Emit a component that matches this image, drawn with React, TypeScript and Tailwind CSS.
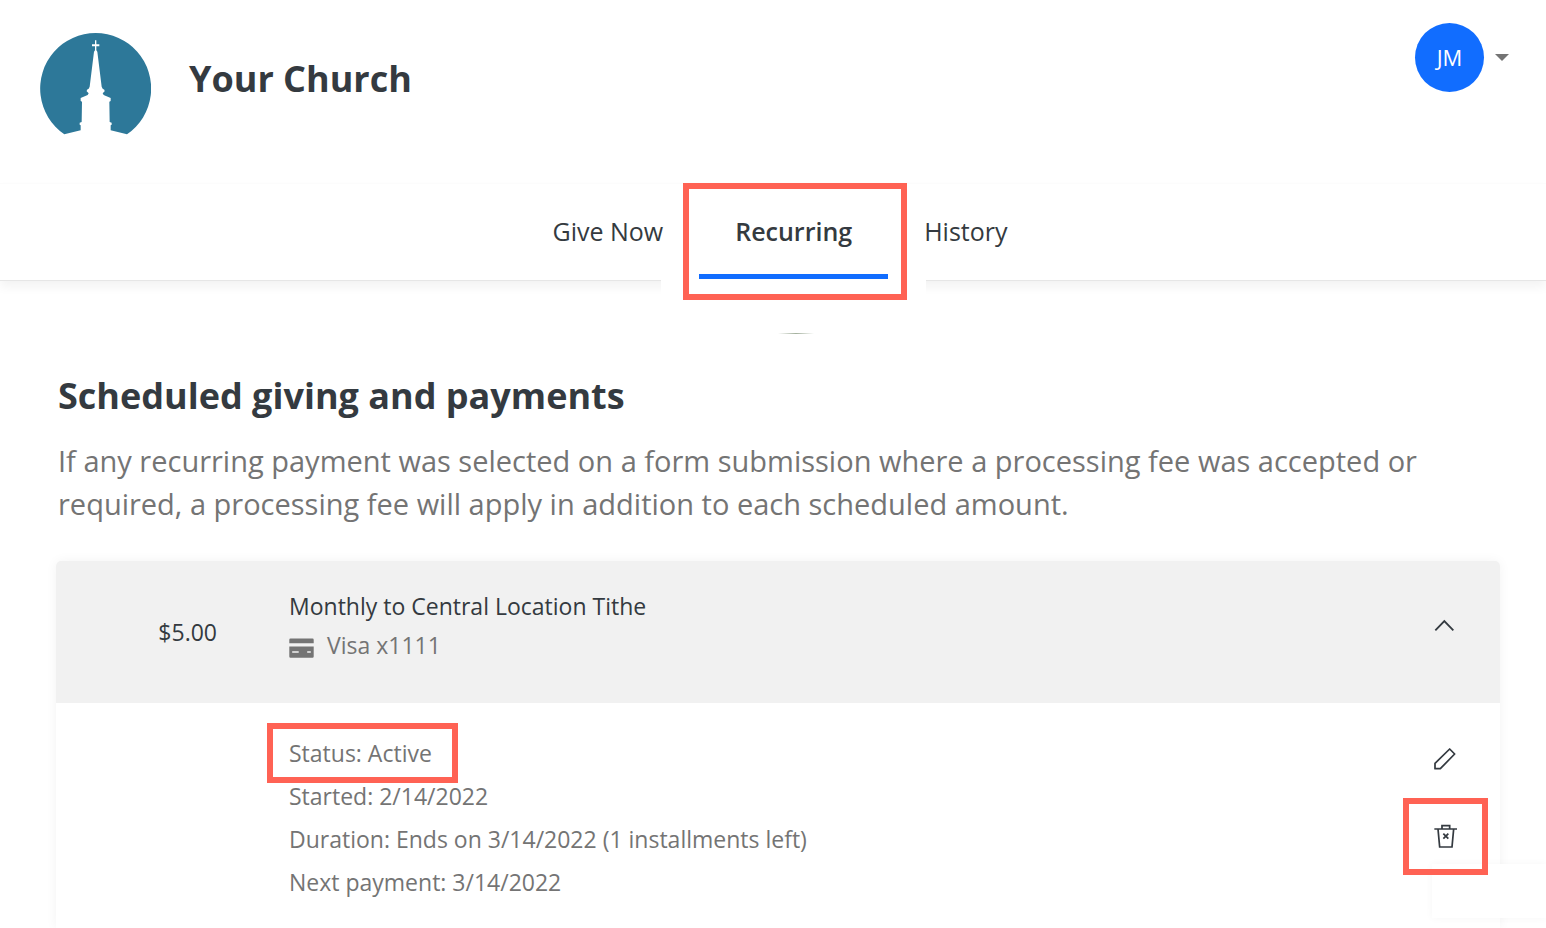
import type { ReactNode } from "react";

function ChurchLogo() {
  return (
    <svg viewBox="60 36 333 306" className="h-[102px] w-[111px] shrink-0" role="img" aria-label="Church steeple">
      <path
        fill="#2d7899"
        d="M133 340 A166.5 166.5 0 1 1 321 340 L272 328 L272 313 L275 311 L275 305 L269 303 L268 242 L272 240 L272 231 L251 222 L248 217 L254 211 L253 206 L248 203 L245 197 L232 92 L229 88 L229 76 L238 76 L238 70 L229 70 L229 58 L225 58 L225 70 L216 70 L216 76 L225 76 L225 88 L222 92 L209 197 L206 203 L201 206 L200 211 L206 217 L203 222 L182 231 L182 240 L186 242 L185 303 L179 305 L179 311 L182 313 L182 328 Z"
      />
    </svg>
  );
}

function CardIcon() {
  return (
    <svg viewBox="0 0 25 20" className="h-5 w-[25px] shrink-0" fill="#747474" aria-hidden="true">
      <path d="M1.5 0.5h22a1.2 1.2 0 0 1 1.2 1.2V5.3H0.3V1.7A1.2 1.2 0 0 1 1.5 0.5z" />
      <path
        fillRule="evenodd"
        d="M0.3 8.5h24.4v10a1.2 1.2 0 0 1-1.2 1.2h-22a1.2 1.2 0 0 1-1.2-1.2zM3.2 13.2v1.6h6.5v-1.6zM18.2 13.2v1.6h3.6v-1.6z"
      />
    </svg>
  );
}

function ChevronUp() {
  return (
    <svg viewBox="162 105 63 63" className="h-[21px] w-[21px]" fill="none" stroke="#343a40" strokeWidth="5.5" aria-hidden="true">
      <path d="M166 151 L193 123 L220 151" />
    </svg>
  );
}

function PencilIcon() {
  return (
    <svg viewBox="160 80 75 75" className="h-[25px] w-[25px]" fill="none" stroke="#343a40" strokeWidth="5.2" aria-hidden="true">
      <path d="M166 145 L166 129 L210 86 L225 101 L182 145 Z" strokeLinejoin="round" />
    </svg>
  );
}

function TrashIcon() {
  return (
    <svg viewBox="160 312 75 75" className="h-[25px] w-[25px]" fill="none" stroke="#343a40" strokeWidth="5.2" aria-hidden="true">
      <path d="M164 327 H232 M187 327 V317 H210 V327 M175 327 L180 381 H217 L222 327" />
      <path d="M191 341 L206 356 M206 341 L191 356" />
    </svg>
  );
}

function Highlight({ className }: { className: string }) {
  return <span aria-hidden="true" className={`pointer-events-none absolute border-[6px] border-[#ff6254] ${className}`} />;
}

function Tab({ children }: { children: ReactNode }) {
  return (
    <a href="#" className="flex items-center px-9">
      {children}
    </a>
  );
}

export default function App() {
  return (
    <div className="relative flex min-h-screen flex-col overflow-x-hidden bg-white font-['Open_Sans',sans-serif] text-[#343a40]">
      <header className="flex h-[183px] items-start justify-between pr-[37px] pl-10">
        <div className="flex items-start gap-[38px] pt-[33px]">
          <ChurchLogo />
          <h1 className="pt-[18px] text-[36px] leading-[56px] font-bold">Your Church</h1>
        </div>
        <button type="button" aria-label="Account menu" className="mt-[23px] flex items-center gap-[11px]">
          <span className="flex h-[69px] w-[69px] items-center justify-center rounded-full bg-[#116dff] text-[22px] text-white">
            JM
          </span>
          <svg viewBox="0 0 14 7" className="h-[7px] w-[14px]" aria-hidden="true">
            <path d="M0 0h14L7 7z" fill="#747474" />
          </svg>
        </button>
      </header>

      <nav className="relative flex h-[98px] justify-center border-t border-b border-t-[#fcfcfc] border-b-[#e6e6e6] pl-[14px] text-[25px] shadow-[0_6px_10px_rgba(0,0,0,0.05)]">
        <Tab>Give Now</Tab>
        <div className="relative flex font-semibold">
          <span aria-hidden="true" className="absolute -inset-x-[38px] top-14 -bottom-5 bg-white" />
          <a
            href="#"
            aria-current="page"
            className="relative mb-px flex items-center border-b-[5px] border-[#116dff] px-9 pt-[6px]"
          >
            Recurring
          </a>
          <Highlight className="-top-px -right-[19px] -bottom-5 -left-4" />
        </div>
        <div className="relative flex">
          <Tab>History</Tab>
        </div>
      </nav>

      <div
        aria-hidden="true"
        className="absolute right-0 bottom-[10px] h-[54px] w-[114px] bg-white shadow-[0_0_8px_rgba(0,0,0,0.04)]"
      />

      <main className="flex flex-1 flex-col pt-[52px] pr-[46px] pl-14">
        <div className="flex justify-center pl-9">
          <div aria-hidden="true" className="h-px w-9 bg-linear-to-r from-transparent via-[#a3b09d] to-transparent" />
        </div>
        <h2 className="mt-[34px] pl-[2px] text-[36px] leading-[56px] font-bold">Scheduled giving and payments</h2>
        <p className="mt-[15px] pl-[2px] text-[29px] leading-[43px] text-[#747474]">
          If any recurring payment was selected on a form submission where a processing fee was accepted or required, a
          processing fee will apply in addition to each scheduled amount.
        </p>

        <section className="mt-9 flex flex-1 flex-col rounded-t-[5px] shadow-[0_0_12px_rgba(0,0,0,0.05)]">
          <div className="flex h-[142px] rounded-t-[5px] bg-[#f1f1f1] pr-[45px] text-[23px]">
            <div className="w-[233px] pt-[51px] pr-[72px] text-right leading-10">$5.00</div>
            <div className="flex-1 pt-[26px] leading-[39px]">
              <div>Monthly to Central Location Tithe</div>
              <div className="flex items-start gap-[13px] text-[#747474]">
                <span className="pt-3">
                  <CardIcon />
                </span>
                <span>Visa x1111</span>
              </div>
            </div>
            <button type="button" aria-label="Collapse" className="mt-[54px] self-start">
              <ChevronUp />
            </button>
          </div>

          <div className="flex flex-1 pr-[42px] pl-[233px]">
            <ul className="flex-1 pt-[29px] text-[23px] leading-[43px] text-[#747474]">
              <li className="relative w-fit">
                Status: Active
                <Highlight className="-top-[9px] -right-[26px] -bottom-[8px] -left-[22px]" />
              </li>
              <li>Started: 2/14/2022</li>
              <li>Duration: Ends on 3/14/2022 (1 installments left)</li>
              <li>Next payment: 3/14/2022</li>
            </ul>
            <div className="flex flex-col items-center gap-[52px] pt-11">
              <button type="button" aria-label="Edit">
                <PencilIcon />
              </button>
              <button type="button" aria-label="Delete" className="relative">
                <TrashIcon />
                <Highlight className="-inset-x-[30px] -inset-y-[26px]" />
              </button>
            </div>
          </div>
        </section>
      </main>
    </div>
  );
}
